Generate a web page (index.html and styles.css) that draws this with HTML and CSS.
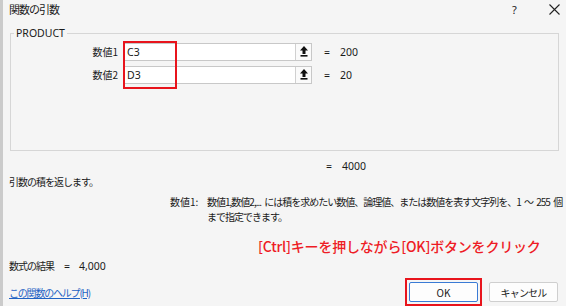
FILE: index.html
```html
<!DOCTYPE html>
<html lang="ja">
<head>
<meta charset="utf-8">
<link rel="stylesheet" href="styles.css">
</head>
<body>
<div class="dialog">
  <div class="titlebar">
    <span class="title">関数の引数</span>
    <span class="help">?</span>
    <span class="close"><svg width="11" height="11" viewBox="0 0 11 11"><path d="M0.5 0.5 L10.5 10.5 M10.5 0.5 L0.5 10.5" stroke="#222" stroke-width="1.1" fill="none"/></svg></span>
  </div>

  <div class="group">
    <span class="legend">PRODUCT</span>
    <div class="rows">
      <div class="row">
        <span class="lbl">数値1</span>
        <div class="input"><span class="val">C3</span><span class="ref"><svg width="8" height="11" viewBox="0 0 8 11"><path d="M4 0 L8 4.5 L5.5 4.5 L5.5 8 L2.5 8 L2.5 4.5 L0 4.5 Z" fill="#111"/><rect x="0.5" y="9" width="7" height="1.6" fill="#111"/></svg></span></div>
        <span class="eq">=</span><span class="res">200</span>
      </div>
      <div class="row">
        <span class="lbl">数値2</span>
        <div class="input"><span class="val">D3</span><span class="ref"><svg width="8" height="11" viewBox="0 0 8 11"><path d="M4 0 L8 4.5 L5.5 4.5 L5.5 8 L2.5 8 L2.5 4.5 L0 4.5 Z" fill="#111"/><rect x="0.5" y="9" width="7" height="1.6" fill="#111"/></svg></span></div>
        <span class="eq">=</span><span class="res">20</span>
      </div>
    </div>
    <div class="mark"></div>
  </div>

  <div class="result"><span class="eq">=</span><span class="res">4000</span></div>
  <div class="desc">引数の積を返します。</div>
  <div class="argdesc">
    <span class="argname">数値1:</span>
    <span class="argtext">数値1,数値2,... には積を求めたい数値、論理値、または数値を表す文字列を、1 ～ 255 個<br>まで指定できます。</span>
  </div>
  <div class="annot">[Ctrl]キーを押しながら[OK]ボタンをクリック</div>
  <div class="formula"><span class="flabel">数式の結果</span><span class="feq">=</span><span class="fres">4,000</span></div>
  <div class="footer">
    <a class="helplink" href="#">この関数のヘルプ(H)</a>
    <div class="buttons">
      <span class="okmark"><button class="btn ok">OK</button></span>
      <button class="btn">キャンセル</button>
    </div>
  </div>
</div>
</body>
</html>
```

FILE: styles.css
```css
html, body {
  margin: 0;
  padding: 0;
}
body {
  width: 566px;
  height: 306px;
  overflow: hidden;
  background: #f5f5f5;
  font-family: "Noto Sans CJK JP", "Noto Sans", sans-serif;
  font-size: 10px;
  color: #1a1a1a;
}
.dialog {
  height: 306px;
  border-left: 3px solid #cbcbcb;
  display: flex;
  flex-direction: column;
  box-sizing: border-box;
}
.titlebar {
  height: 19px;
  display: flex;
  align-items: center;
  padding-left: 6px;
  padding-right: 6px;
}
.title {
  font-size: 11px;
  letter-spacing: -1px;
  flex: 1;
}
.help {
  font-family: "Noto Sans", sans-serif;
  font-size: 11px;
  width: 37px;
}
.close {
  display: flex;
}
.group {
  position: relative;
  margin: 14px 7px 0 7px;
  border: 1px solid #d6d6d6;
  height: 119px;
  box-sizing: border-box;
}
.legend {
  position: absolute;
  top: -8px;
  left: 3px;
  padding: 0 2px;
  background: #f5f5f5;
  font-family: "Noto Sans", sans-serif;
  font-size: 10.5px;
  line-height: 14px;
}
.rows {
  display: flex;
  flex-direction: column;
  gap: 5px;
  padding-top: 9px;
}
.row {
  display: flex;
  align-items: center;
  height: 18px;
}
.lbl {
  width: 107px;
  text-align: right;
  margin-right: 5px;
}
.input {
  width: 189px;
  height: 18px;
  box-sizing: border-box;
  border: 1px solid #c8c8c8;
  background: #fff;
  display: flex;
  align-items: center;
}
.val {
  flex: 1;
  padding-left: 3px;
  font-family: "Noto Sans", sans-serif;
  font-size: 10.5px;
}
.ref {
  width: 15px;
  height: 16px;
  border-left: 1px solid #d0d0d0;
  background: #fafafa;
  display: flex;
  align-items: center;
  justify-content: center;
}
.eq {
  font-family: "Noto Sans", sans-serif;
  font-size: 10.5px;
  margin-left: 12px;
  width: 16px;
}
.res {
  font-family: "Noto Sans", sans-serif;
  font-size: 10.5px;
}
.mark {
  position: absolute;
  left: 112px;
  top: 7px;
  width: 54px;
  height: 48px;
  box-sizing: border-box;
  border: 2px solid #e8141c;
}
.result {
  margin-top: 8px;
  height: 14px;
  line-height: 14px;
  padding-left: 311px;
  display: flex;
}
.desc {
  margin-top: 2px;
  padding-left: 6px;
  line-height: 14px;
  letter-spacing: -1px;
}
.argdesc {
  margin-top: 5px;
  display: flex;
  padding-left: 167px;
  line-height: 15px;
  white-space: pre;
}
.argname {
  width: 37px;
  flex-shrink: 0;
}
.argtext {
  letter-spacing: -1px;
  word-spacing: 2px;
}
.annot {
  margin-top: 13px;
  padding-left: 255px;
  color: #ee1c25;
  font-size: 14px;
  font-weight: 500;
  line-height: 18px;
  letter-spacing: -0.2px;
}
.formula {
  margin-top: 4px;
  padding-left: 6px;
  line-height: 14px;
  display: flex;
  align-items: baseline;
}
.flabel {
  letter-spacing: -1px;
}
.feq {
  font-family: "Noto Sans", sans-serif;
  font-size: 10.5px;
  margin-left: 10px;
}
.fres {
  font-family: "Noto Sans", sans-serif;
  margin-left: 9px;
  font-size: 10.5px;
}
.footer {
  margin-top: 5px;
  display: flex;
  align-items: center;
  justify-content: space-between;
  padding-left: 6px;
  padding-right: 8px;
}
.helplink {
  color: #1f62c4;
  text-decoration: underline;
  letter-spacing: -1.2px;
}
.buttons {
  display: flex;
  align-items: center;
  gap: 7px;
}
.okmark {
  display: flex;
  padding: 2px;
  border: 2px solid #e8141c;
}
.btn {
  width: 69px;
  height: 20px;
  box-sizing: border-box;
  background: #fdfdfd;
  border: 1px solid #cfcfcf;
  border-radius: 2px;
  font-family: "Noto Sans CJK JP", "Noto Sans", sans-serif;
  font-size: 10px;
  color: #1a1a1a;
  padding: 0;
  letter-spacing: -0.8px;
}
.btn.ok {
  border: 1px solid #3a7bd5;
  letter-spacing: 0;
}
```
